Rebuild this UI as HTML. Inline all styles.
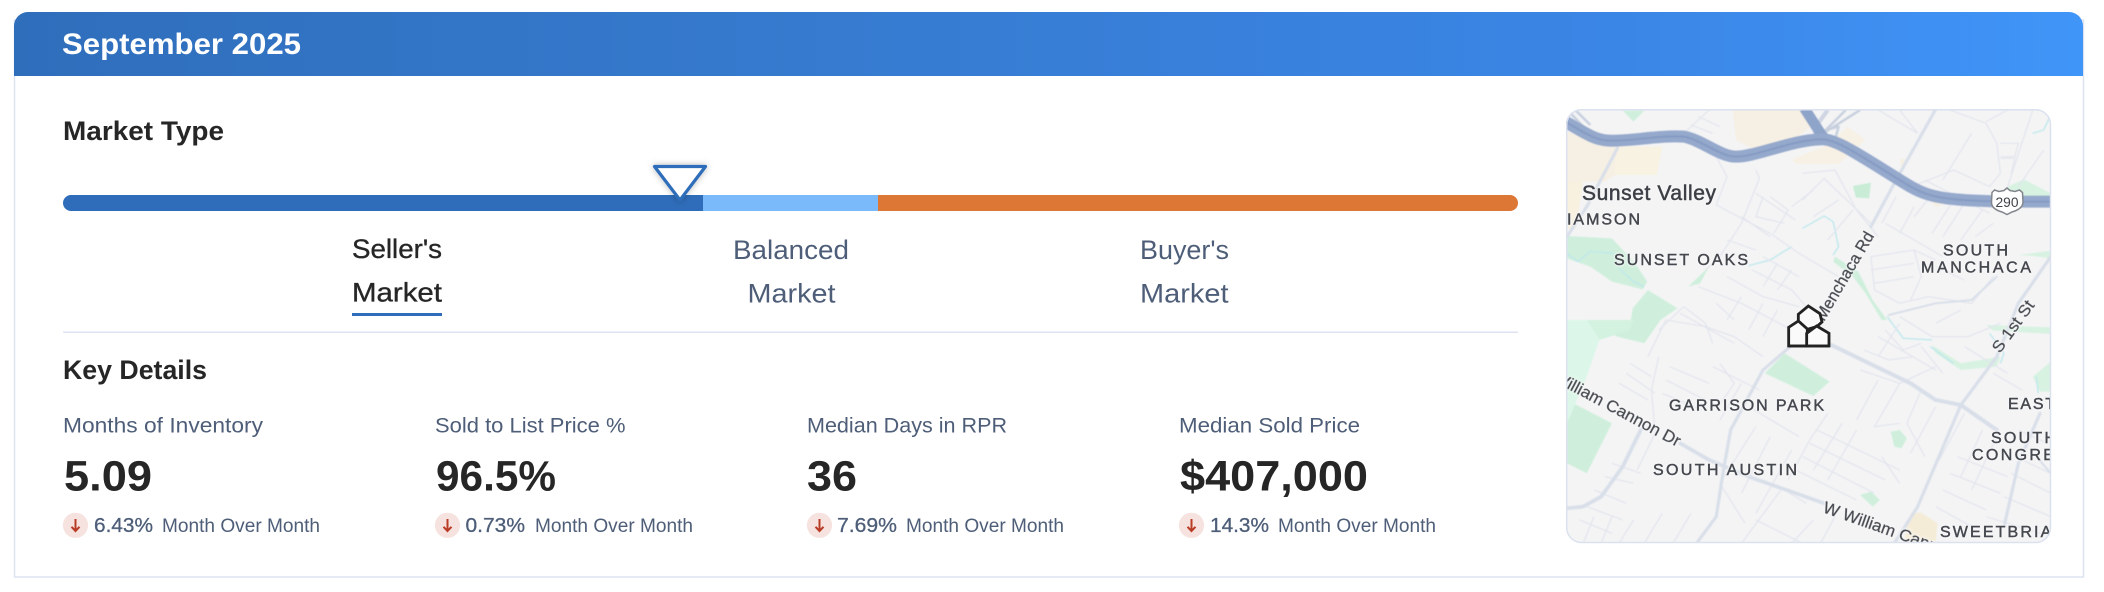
<!DOCTYPE html>
<html lang="en">
<head>
<meta charset="utf-8">
<title>September 2025 Market Type</title>
<style>
html,body{margin:0;padding:0;background:#fff;width:2104px;height:592px;overflow:hidden}
svg{display:block}
text{font-family:"Liberation Sans",Arial,sans-serif}
.h{font-weight:700;fill:#262626;font-size:26.5px}
.sl{font-size:27px;fill:#262626;stroke:#262626;stroke-width:.35}
.ul{font-size:27px;fill:#4e5e78}
.lab{font-size:21.5px;fill:#4e5e78}
.val{font-size:43px;font-weight:700;fill:#262626}
.pct{font-size:20.5px;fill:#4e5e78;stroke:#4e5e78;stroke-width:.3}
.mom{font-size:19.5px;fill:#4e5e78}
.ml{font-size:16px;fill:#45484e;stroke:#45484e;stroke-width:.45}
.rd{font-size:17px;fill:#45484e;stroke:#45484e;stroke-width:.2}
.halo{filter:drop-shadow(0 0 1.2px #f8f8f9) drop-shadow(0 0 1px #f8f8f9)}
</style>
</head>
<body>
<svg width="2104" height="592" viewBox="0 0 2104 592" xmlns="http://www.w3.org/2000/svg">
<defs>
<linearGradient id="hg" x1="0" y1="0" x2="1" y2="0">
<stop offset="0" stop-color="#2f6ebb"/><stop offset=".4" stop-color="#367bd0"/><stop offset=".76" stop-color="#3a85e5"/><stop offset="1" stop-color="#4095f8"/>
</linearGradient>
<clipPath id="mc"><rect x="1566" y="109" width="485" height="434" rx="15"/></clipPath>
<filter id="sh" x="-40%" y="-40%" width="180%" height="180%"><feDropShadow dx="0" dy="0" stdDeviation="3.5" flood-color="#000" flood-opacity=".28"/></filter>
<filter id="bl" x="0" y="0" width="100%" height="100%"><feGaussianBlur stdDeviation="1.3"/></filter>
</defs>

<!-- card -->
<rect x="14.5" y="20" width="2069" height="557" fill="#fff" stroke="#dde3f0" stroke-width="1.5"/>
<path d="M14 76V26a14 14 0 0 1 14-14H2069a14 14 0 0 1 14 14V76Z" fill="url(#hg)"/>
<text x="62" y="54" font-size="30" font-weight="700" fill="#fff" textLength="239" lengthAdjust="spacingAndGlyphs">September 2025</text>

<!-- market type -->
<text class="h" x="63" y="140" textLength="161" lengthAdjust="spacingAndGlyphs">Market Type</text>
<path d="M71 195H703V211H71a8 8 0 0 1 0-16Z" fill="#2f6dba"/>
<rect x="703" y="195" width="175" height="16" fill="#7bbafa"/>
<path d="M878 195H1510a8 8 0 0 1 0 16H878Z" fill="#dc7736"/>
<path d="M654.5 166.500H705.500L680 200Z" fill="#fff" stroke="#2f6dba" stroke-width="3.200" stroke-linejoin="round" filter="url(#sh)"/>

<text class="sl" x="352" y="258" textLength="90" lengthAdjust="spacingAndGlyphs">Seller's</text>
<text class="sl" x="352" y="301.500" textLength="90" lengthAdjust="spacingAndGlyphs">Market</text>
<rect x="352" y="313" width="90" height="3" fill="#2f6dba"/>
<text class="ul" x="733" y="259" textLength="116" lengthAdjust="spacingAndGlyphs">Balanced</text>
<text class="ul" x="747.5" y="302.500" textLength="88" lengthAdjust="spacingAndGlyphs">Market</text>
<text class="ul" x="1140" y="259" textLength="89" lengthAdjust="spacingAndGlyphs">Buyer's</text>
<text class="ul" x="1140" y="302.500" textLength="88.500" lengthAdjust="spacingAndGlyphs">Market</text>
<rect x="63" y="331.500" width="1455" height="1.500" fill="#dde3f0"/>

<!-- key details -->
<text class="h" x="63" y="379" textLength="144" lengthAdjust="spacingAndGlyphs">Key Details</text>

<text class="lab" x="63" y="432.500" textLength="200" lengthAdjust="spacingAndGlyphs">Months of Inventory</text>
<text class="lab" x="435" y="432.500" textLength="190.500" lengthAdjust="spacingAndGlyphs">Sold to List Price %</text>
<text class="lab" x="807" y="432.500" textLength="200" lengthAdjust="spacingAndGlyphs">Median Days in RPR</text>
<text class="lab" x="1179" y="432.500" textLength="181" lengthAdjust="spacingAndGlyphs">Median Sold Price</text>

<text class="val" x="64" y="490.500" textLength="88" lengthAdjust="spacingAndGlyphs">5.09</text>
<text class="val" x="436" y="490.500" textLength="120" lengthAdjust="spacingAndGlyphs">96.5%</text>
<text class="val" x="807" y="490.500" textLength="50" lengthAdjust="spacingAndGlyphs">36</text>
<text class="val" x="1180" y="490.500" textLength="188" lengthAdjust="spacingAndGlyphs">$407,000</text>

<g>
<circle cx="75.5" cy="525.300" r="12.600" fill="#f6e2df"/>
<path d="M75.500 519V531M71.500 526.800L75.500 531L79.500 526.800" fill="none" stroke="#b93c25" stroke-width="2"/>
</g>
<g>
<circle cx="447.500" cy="525.300" r="12.600" fill="#f6e2df"/>
<path d="M447.500 519V531M443.500 526.800L447.500 531L451.500 526.800" fill="none" stroke="#b93c25" stroke-width="2"/>
</g>
<g>
<circle cx="819.500" cy="525.300" r="12.600" fill="#f6e2df"/>
<path d="M819.500 519V531M815.500 526.800L819.500 531L823.500 526.800" fill="none" stroke="#b93c25" stroke-width="2"/>
</g>
<g>
<circle cx="1191.500" cy="525.300" r="12.600" fill="#f6e2df"/>
<path d="M1191.500 519V531M1187.500 526.800L1191.500 531L1195.500 526.800" fill="none" stroke="#b93c25" stroke-width="2"/>
</g>
<text class="pct" x="94" y="532" textLength="59" lengthAdjust="spacingAndGlyphs">6.43%</text>
<text class="mom" x="162" y="532" textLength="158" lengthAdjust="spacingAndGlyphs">Month Over Month</text>
<text class="pct" x="465.500" y="532" textLength="59.500" lengthAdjust="spacingAndGlyphs">0.73%</text>
<text class="mom" x="535" y="532" textLength="158" lengthAdjust="spacingAndGlyphs">Month Over Month</text>
<text class="pct" x="837" y="532" textLength="60" lengthAdjust="spacingAndGlyphs">7.69%</text>
<text class="mom" x="906" y="532" textLength="158" lengthAdjust="spacingAndGlyphs">Month Over Month</text>
<text class="pct" x="1210" y="532" textLength="59" lengthAdjust="spacingAndGlyphs">14.3%</text>
<text class="mom" x="1278" y="532" textLength="158" lengthAdjust="spacingAndGlyphs">Month Over Month</text>

<!-- map -->
<g clip-path="url(#mc)">
<rect x="1566" y="109" width="485" height="434" fill="#f4f4f5"/>
<g transform="translate(1540,90) scale(.3597,.3333)" filter="url(#bl)">
  <!-- beige -->
  <g fill="#f6f0e4">
    <path d="M535 58H735L752 112L680 168L590 175L545 150Z"/>
    <path d="M75 125L210 170H335L320 215L300 255H210L180 275L120 275L100 360L75 360Z"/>
    <path d="M215 170H340L325 255H205Z" fill="#f8f2e2"/>
    <path d="M75 275H120L100 415L75 415Z" fill="#f8f1df"/>
    <path d="M700 208L800 165L855 110L905 150L830 222H710Z" fill="#f7f1e5"/>
    <path d="M1000 205L1020 210L1005 235Z"/>
    <path d="M1080 320L1130 340L1100 352Z"/>
    <path d="M1030 1270L1060 1268L1105 1300L1100 1360L1010 1360Z" fill="#f5ecd8"/>
  </g>
  <!-- green -->
  <g fill="#cfefdc">
    <path d="M75 438L200 445L265 520L298 575L285 598L200 575L140 530L75 505Z"/>
    <path d="M258 655L300 600L382 655L335 690L290 760L215 740L135 700L250 705Z"/>
    <path d="M75 930L200 1000L130 1150L75 1120Z"/>
    <path d="M680 790L805 875L760 918L625 850Z"/>
    <path d="M870 288L920 278L915 325L878 322Z" fill="#c8ecd6"/>
    <path d="M975 1025L1000 1020L1020 1045L1005 1075L985 1070Z"/>
    <path d="M890 1215L920 1205L945 1230L925 1250Z"/>
    <path d="M412 590L470 530L445 580Z"/>
    <path d="M1090 765L1170 820L1280 800L1270 830L1170 840L1100 790Z" fill="#d8f2e2"/>
    <path d="M1240 705L1420 712V732L1330 726L1260 722Z" fill="#d8f2e2"/>
    <path d="M1300 290L1345 268L1420 310V320H1340L1310 310Z" fill="#d8f2e2"/>
    <path d="M1330 495L1420 482V505L1370 498Z" fill="#d8f2e2"/>
    <path d="M1370 860L1420 815V905L1390 905Z" fill="#d8f2e2"/>
    <path d="M820 500L885 545L925 630L965 690L950 690L905 610L870 560L815 515Z"/>
    <path d="M230 62H290L260 95Z"/>
  </g>
  <path d="M75 690H130L165 750L130 860L75 1000Z" fill="#dcf7e9"/>
  <path d="M130 690H260L250 720L165 750Z" fill="#d3f2e0"/>
  <!-- water -->
  <g fill="none" stroke="#bfe8ec" stroke-width="4">
    <path d="M75 490L105 515L140 484L205 490M220 535L260 575L290 590"/>
    <path d="M580 527L640 510L700 470M730 415L790 378L815 395L830 470L815 495"/>
    <path d="M965 680L1010 745L1090 750M1085 770L1150 820M1250 730L1290 790L1280 820M1380 860L1385 910"/>
    <path d="M1370 130L1400 120L1418 80"/>
  </g>
  <!-- minor streets -->
  <g fill="none" stroke="#e2e5ed" stroke-width="3.500">
    <path d="M400 130L470 60M440 80L500 110M420 105L480 130M480 180L520 260L490 345L640 430L720 490L830 560M600 240L610 265L560 400L500 500L460 540M600 310L710 390M640 320L690 360L650 430M560 380L640 440M520 450L600 480M620 320L600 380L680 400M730 250L820 240L880 360L940 440M730 330L790 265L920 400M700 350L760 300M760 380L830 330M870 360L800 450"/>
    <path d="M520 560L620 620L720 650M440 590L560 640L700 720M490 640L540 690M590 540L700 600L740 650M620 500L720 560M660 520L620 590M700 540L660 600M560 620L520 690M620 640L580 720M660 660L620 740M400 650L460 700L480 760M390 670L540 760M330 720L400 650"/>
    <path d="M940 60L1050 130L1000 60M1140 60L1240 100L1270 160L1280 250L1250 290L1150 240L1010 300M1240 95L1300 60M1280 160H1330L1320 200H1280M1280 205H1320L1310 250M1370 60L1300 290M1400 180L1330 290M1200 130L1120 270M1070 270L1250 370M1100 300L1040 380M1180 340L1120 440M1230 360L1170 450M990 320L950 400M1040 350L1000 430M1150 330L1090 430M1260 400L1210 440M960 400L1120 500"/>
    <path d="M920 500L1040 480L1100 510M920 540L1040 520M930 580L1040 560M920 500L930 600L1000 640L1080 620L1200 640L1260 560M1040 480L1060 560L1030 630M1100 530L1180 570M1000 680L1090 740L1190 740L1280 700M1100 700L1170 660M1000 700L940 800M960 720L1010 780L1060 760M1060 770L1120 850"/>
    <path d="M300 800L350 690L460 710L540 740L620 800M330 800L310 900L320 1030L270 1140M250 820L310 860M240 850L320 910M220 880L300 930M360 830L470 880M350 870L460 930M340 910L450 960M500 820L540 880L490 960M480 830L610 900M560 880L500 990M580 950L720 1040M200 1120L280 1150M180 1160L260 1180M150 1200L240 1240M130 1250L230 1290M110 1290L200 1330"/>
    <path d="M800 970L750 1050L690 1170M840 1000L760 1140M880 1020L800 1170M770 1020L1000 1140M750 1060L960 1170M730 1100L930 1210M710 1140L880 1230M680 1200L740 1240M600 1010L500 1180L570 1300M640 1040L560 1210M700 1080L600 1270M670 1200L560 1360M600 1290L730 1360M760 1290L700 1360M820 1280L780 1360"/>
    <path d="M940 870L880 990M1000 880L930 1010L1000 1000M950 1100L1000 1180M1020 1000L1070 1100M1060 900L1020 1000M1100 950L1030 1090M1180 970L1110 1110M1230 1020L1170 1160M1270 1040L1200 1200M1160 1100L1300 1160M1140 1150L1280 1210M1120 1200L1240 1260M1100 1250L1200 1310M1330 1020L1410 1060M1320 1100L1420 1150M1310 1150L1420 1210M1290 1220L1420 1280M1240 1280L1420 1340"/>
    <path d="M900 780L970 810L1040 800M890 840L1000 880L1100 830M940 740L1100 840M1180 770L1300 850M1260 850L1340 900M150 1280L120 1360M200 1280L170 1360M260 1290L220 1360M340 1270L290 1360M420 1270L370 1360"/>
  </g>
  <!-- major roads -->
  <g fill="none" stroke="#d9dfe9" stroke-linecap="round" stroke-linejoin="round">
    <path stroke-width="9" d="M1100 58L990 270L920 410"/>
    <path stroke-width="9" d="M785 690L690 775L620 840L530 1020L510 1140L490 1280L435 1360"/>
    <path stroke-width="12" d="M810 765L1030 880L1100 930L1170 945L1270 1020"/>
    <path stroke-width="9" d="M1420 500L1330 640L1270 800L1170 945L1050 1250L985 1360"/>
    <path stroke-width="11" d="M390 1060L470 1110L580 1160L790 1240"/>
    <path stroke-width="11" d="M280 1020L230 1130L170 1220L120 1250L75 1255"/>
    <path stroke-width="9" d="M1390 970L1330 1120L1290 1310"/>
    <path stroke-width="9" d="M215 175L130 350L75 440"/>
    <path stroke-width="6" d="M970 675L1100 640L1200 630L1270 560"/>
    <path stroke-width="6" d="M1380 1100L1420 1150"/>
  </g>
  <!-- highway -->
  <g fill="none" stroke-linejoin="round">
    <path stroke="#c8d0de" stroke-width="7" d="M780 135L890 60M790 125L850 60M760 130L830 110L820 150M100 62L140 105M85 70L125 115"/>
    <path stroke="#cfd6e2" stroke-width="12" d="M770 105L800 60"/>
    <path stroke="#8fa4c9" stroke-width="30" d="M735 55L780 130L795 150"/>
    <path stroke="#95a9cc" stroke-width="36" d="M70 95C120 125 150 150 190 152C250 155 330 135 400 140C450 150 500 200 545 200C600 200 700 150 780 148C820 145 880 190 1000 270C1050 305 1080 318 1130 325C1200 335 1300 335 1425 335"/>
    <path stroke="#859bc3" stroke-width="6" d="M70 95C120 125 150 150 190 152C250 155 330 135 400 140C450 150 500 200 545 200C600 200 700 150 780 148C820 145 880 190 1000 270C1050 305 1080 318 1130 325C1200 335 1300 335 1425 335"/>
  </g>
</g>

<!-- shield -->
<path d="M1992 192.500L1994.500 190L1999 191.500L2004 190.500L2007 188L2010 190.500L2015 191.500L2019.500 190L2022.500 192.500L2023 202C2023 208 2016 211 2012 212L2007 214.500L2002 212C1998 211 1991 208 1991.500 202Z" fill="#fff" stroke="#82868c" stroke-width="1.500"/>
<text x="1995.500" y="207" font-size="13.500" fill="#3f4247" textLength="23" lengthAdjust="spacingAndGlyphs">290</text>

<!-- map labels -->
<text class="halo" x="1582" y="200" font-size="21" fill="#3c3f45" stroke="#3c3f45" stroke-width=".5" textLength="134" lengthAdjust="spacing">Sunset Valley</text>
<text class="ml halo" x="1567" y="224.500" textLength="73" lengthAdjust="spacing">IAMSON</text>
<text class="ml halo" x="1614" y="265" textLength="134" lengthAdjust="spacing">SUNSET OAKS</text>
<text class="ml halo" x="1943" y="255.500" textLength="65" lengthAdjust="spacing">SOUTH</text>
<text class="ml halo" x="1921" y="272.500" textLength="110" lengthAdjust="spacing">MANCHACA</text>
<text class="ml halo" x="1669" y="410.500" textLength="155" lengthAdjust="spacing">GARRISON PARK</text>
<text class="ml halo" x="1653" y="475" textLength="144" lengthAdjust="spacing">SOUTH AUSTIN</text>
<text class="ml halo" x="2008" y="409" textLength="47" lengthAdjust="spacing">EAST</text>
<text class="ml halo" x="1991" y="443" textLength="65" lengthAdjust="spacing">SOUTH</text>
<text class="ml halo" x="1972" y="460" textLength="108" lengthAdjust="spacing">CONGRESS</text>
<text class="ml halo" x="1940" y="537" textLength="125" lengthAdjust="spacing">SWEETBRIAR</text>
<text class="rd halo" transform="translate(1824,322) rotate(-59.600)" textLength="100" lengthAdjust="spacingAndGlyphs">Menchaca Rd</text>
<text class="rd halo" transform="translate(2000,354) rotate(-54)" textLength="60" lengthAdjust="spacingAndGlyphs">S 1st St</text>
<text class="rd halo" text-anchor="end" transform="translate(1677,447) rotate(28)">William Cannon Dr</text>
<text class="rd halo" transform="translate(1822,512) rotate(19.500)">W William Cannon</text>

<!-- pin -->
<g transform="translate(1770,290) scale(.3333)" stroke="#222" stroke-width="8.500" stroke-linejoin="miter">
  <path d="M85 73L115 48L150 71L156 96L140 110L112 118L85 93Z" fill="#fafafa"/>
  <path d="M56 168V112L85 93L112 117V168Z" fill="#fafafa"/>
  <path d="M110 168V130L140 108L177 130V168Z" fill="#fafafa"/>
  <path d="M56 168H177" fill="none"/>
</g>
</g>
<rect x="1566.700" y="109.700" width="483.800" height="432.800" rx="15" fill="none" stroke="#dbe1ee" stroke-width="1.500"/>
</svg>
</body>
</html>
